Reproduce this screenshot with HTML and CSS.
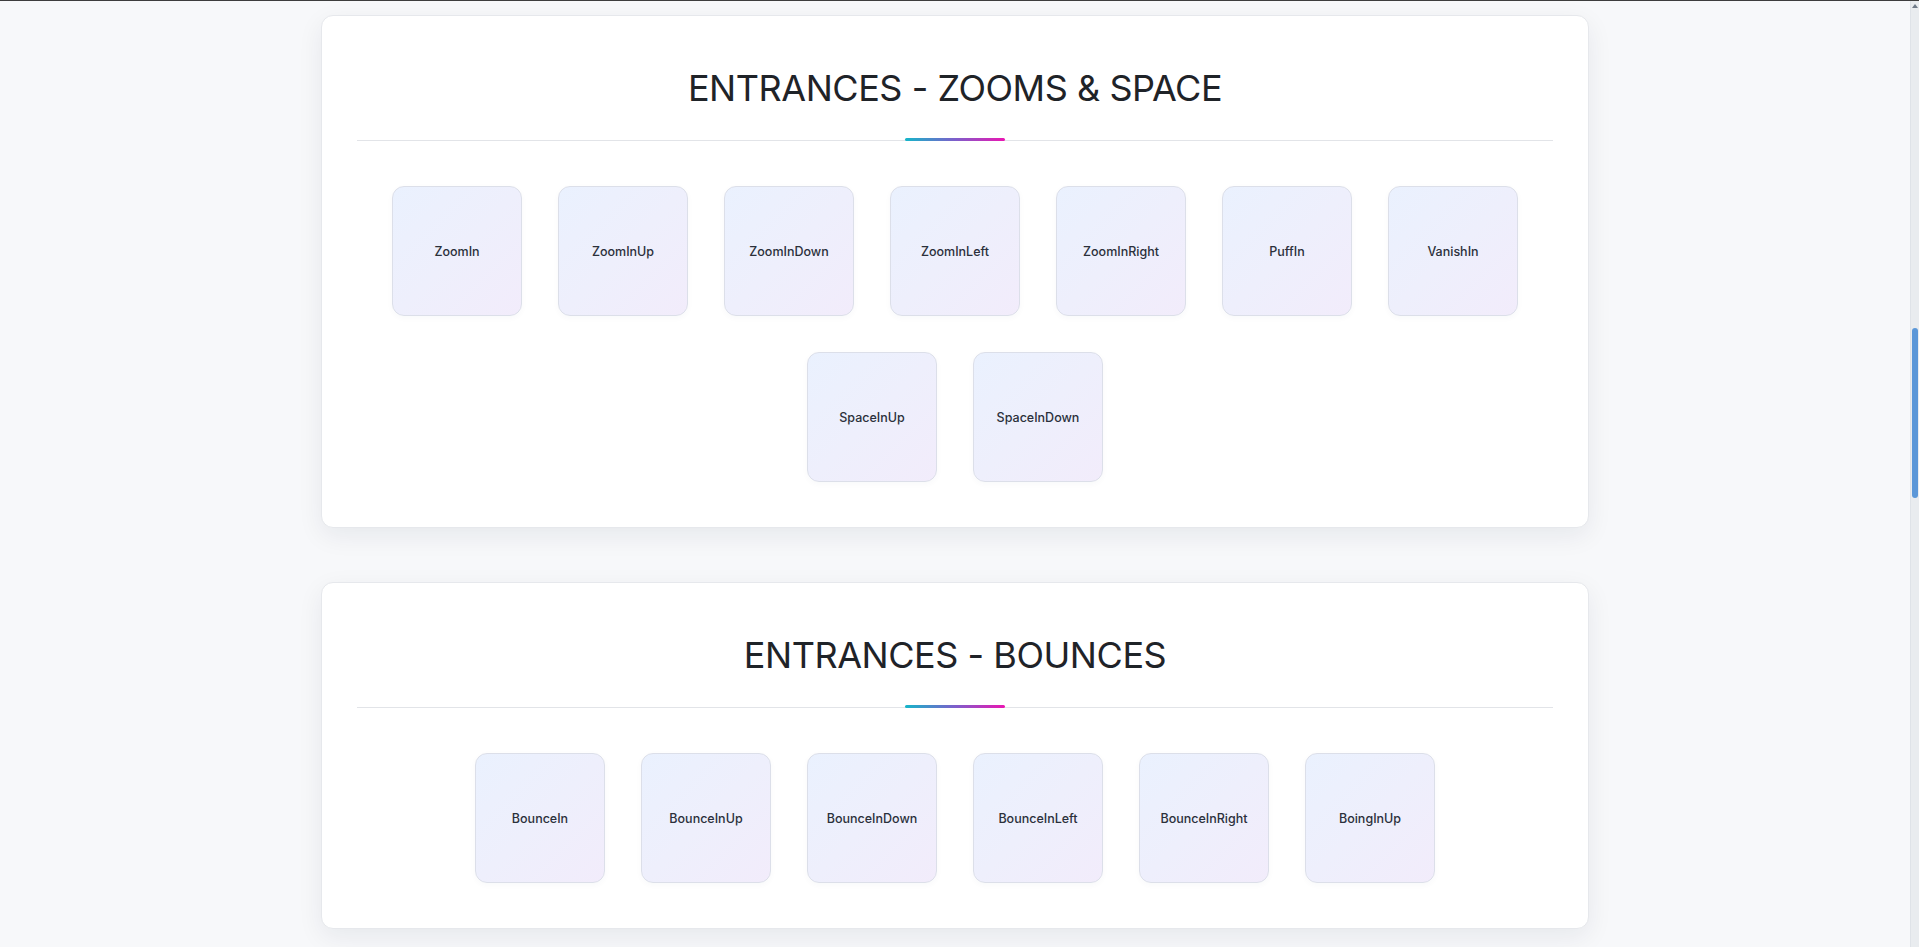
FILE: index.html
```html
<!DOCTYPE html>
<html lang="en">
<head>
<meta charset="utf-8">
<title>Animations</title>
<link rel="stylesheet" href="styles.css">
</head>
<body>
<div class="topline"></div>
<div class="scrollbar"><span class="scroll-up"></span><span class="scroll-thumb"></span></div>
<main class="page">
  <section class="card">
    <header class="card-head">
      <h2 class="card-title">ENTRANCES - ZOOMS &amp; SPACE</h2>
    </header>
    <div class="grid">
      <div class="tile">ZoomIn</div>
      <div class="tile">ZoomInUp</div>
      <div class="tile">ZoomInDown</div>
      <div class="tile">ZoomInLeft</div>
      <div class="tile">ZoomInRight</div>
      <div class="tile">PuffIn</div>
      <div class="tile">VanishIn</div>
      <div class="tile">SpaceInUp</div>
      <div class="tile">SpaceInDown</div>
    </div>
  </section>
  <section class="card">
    <header class="card-head">
      <h2 class="card-title">ENTRANCES - BOUNCES</h2>
    </header>
    <div class="grid">
      <div class="tile">BounceIn</div>
      <div class="tile">BounceInUp</div>
      <div class="tile">BounceInDown</div>
      <div class="tile">BounceInLeft</div>
      <div class="tile">BounceInRight</div>
      <div class="tile">BoingInUp</div>
    </div>
  </section>
</main>
</body>
</html>
```
FILE: styles.css
```css
* {
  box-sizing: border-box;
}

html {
  background: #f7f8fa;
}

body {
  margin: 0;
  padding-right: 9px;
  font-family: Inter, "Noto Sans", "Liberation Sans", sans-serif;
  color: #212529;
  background: #f7f8fa;
}

.topline {
  position: fixed;
  top: 0;
  left: 0;
  right: 0;
  height: 1px;
  background: #3d3d3d;
  z-index: 10;
}

.scrollbar {
  position: fixed;
  top: 0;
  right: 0;
  bottom: 0;
  width: 9px;
  background: #e9ecef;
  border-left: 1px solid #dfe3e8;
  z-index: 9;
}

.scroll-up {
  position: absolute;
  top: 4px;
  left: 1px;
  width: 0;
  height: 0;
  border-left: 3px solid transparent;
  border-right: 3px solid transparent;
  border-bottom: 4px solid #6f7a88;
}

.scroll-thumb {
  position: absolute;
  top: 328px;
  right: 1px;
  width: 6px;
  height: 170px;
  border-radius: 3px;
  background: #5b97d8;
}

.page {
  max-width: 1268px;
  margin: 0 auto;
  padding: 15px 0 19px;
  display: flex;
  flex-direction: column;
  gap: 54px;
}

.card {
  background: #ffffff;
  border: 1px solid #e6e8ec;
  border-radius: 12px;
  box-shadow: 0 8px 26px rgba(20, 30, 50, 0.07);
  padding: 35px 35px 45px;
}

.card-head {
  position: relative;
  padding: 15px 0 30px;
  border-bottom: 1px solid #e2e4e8;
  text-align: center;
}

.card-head::after {
  content: "";
  position: absolute;
  left: 50%;
  bottom: -1px;
  width: 100px;
  height: 3px;
  margin-left: -50px;
  border-radius: 2px;
  background: linear-gradient(90deg, #15b6c9, #7d5fcb 50%, #ea16b2);
}

.card-title {
  margin: 0;
  font-size: 36px;
  line-height: 44px;
  font-weight: 400;
  letter-spacing: -0.45px;
  color: #1f2328;
}

.grid {
  margin-top: 45px;
  display: flex;
  flex-wrap: wrap;
  justify-content: center;
  gap: 36px;
}

.tile {
  width: 130px;
  height: 130px;
  display: flex;
  align-items: center;
  justify-content: center;
  border: 1px solid #dcdfe9;
  border-radius: 12px;
  background: linear-gradient(135deg, #eaf1fe 0%, #eeeffc 50%, #f2ecfb 100%);
  box-shadow: 0 2px 6px rgba(40, 50, 90, 0.03);
  font-size: 12.5px;
  font-weight: 500;
  color: #2b303b;
}
```
